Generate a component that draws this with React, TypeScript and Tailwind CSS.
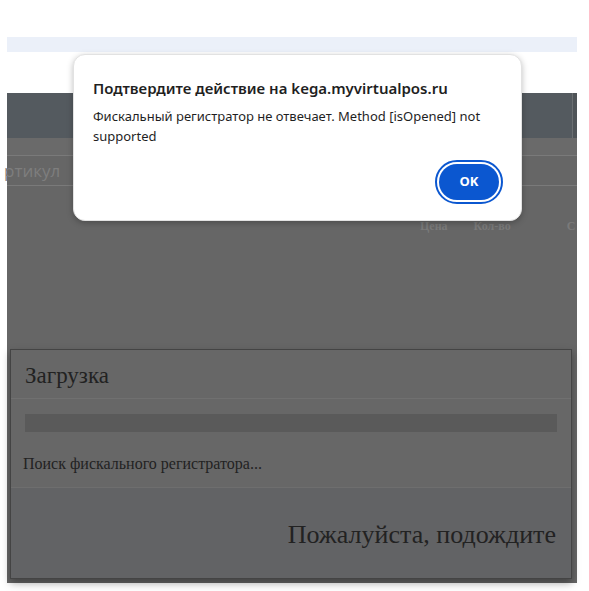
import React from 'react';

const App: React.FC = () => {
  return (
    <div className="relative w-[589px] h-[591px] overflow-hidden bg-white">
      <div className="px-[7px] pt-[37px] w-[584px]">
        {/* top strip */}
        <div className="h-[15px] bg-[#ebf0f9]" />
        <div className="h-[41px] bg-white" />

        {/* dimmed page */}
        <div className="relative h-[490px] bg-[#666666]">
          <div className="flex h-[45px] bg-[#545a5f]">
            <div className="flex-1" />
            <div className="w-px bg-[#6b6f72]" />
            <div className="w-[4px] bg-[#4f5458]" />
          </div>
          <div className="h-[18px] border-b border-[#7a7a7a] bg-[#6a6a6a]" />
          <div className="flex h-[30px] items-center border-b border-[#7a7a7a] bg-[#666666]">
            <span className="-ml-[3px] font-['Open_Sans',sans-serif] text-[17px] text-[#7e7e7e]">ртикул</span>
          </div>
          <div className="flex h-[49px] items-end font-['Liberation_Serif',serif] text-[12px] font-bold text-[#7a7a7a]">
            <span className="ml-[413px]">Цена</span>
            <span className="ml-[26px]">Кол-во</span>
            <span className="ml-[56px]">С</span>
          </div>

          {/* loading modal */}
          <div className="absolute left-[3px] top-[256px] flex h-[230px] w-[562px] flex-col border border-[#444444] bg-[#676767] shadow-[0_4px_8px_rgba(0,0,0,0.35)] font-['Liberation_Serif',serif] text-[#222222]">
            <div className="flex h-[49px] items-center border-b border-[#707070] px-[14px] pt-[4px]">
              <span className="text-[23px]">Загрузка</span>
            </div>
            <div className="flex flex-col px-[14px] pt-[15px]">
              <div className="h-[18px] bg-[#5a5a5a]" />
              <div className="mt-[22px] h-[33px] -ml-[2px] text-[16px] leading-[20px]">Поиск фискального регистратора...</div>
            </div>
            <div className="flex flex-1 items-center justify-end border-t border-[#6e6e6e] bg-[#626365] px-[15px] pt-[2px]">
              <span className="text-[26px]">Пожалуйста, подождите</span>
            </div>
          </div>
        </div>
      </div>

      {/* browser confirm dialog */}
      <div className="absolute left-[73px] top-[54px] h-[167px] w-[449px] rounded-[12px] border border-[#e2e2e2] bg-white shadow-[0_2px_6px_rgba(0,0,0,0.25)] font-['Noto_Sans',sans-serif]">
        <div className="px-[19px] pt-[22px]">
          <div className="text-[15px] font-semibold leading-[22px] text-[#1f1f1f]">
            Подтвердите действие на kega.myvirtualpos.ru
          </div>
          <div className="mt-[7px] w-[400px] text-[13px] leading-[20px] text-[#1f1f1f]">
            Фискальный регистратор не отвечает. Method [isOpened] not supported
          </div>
        </div>
        <div className="absolute left-[361px] top-[105px] flex h-[44px] w-[68px] items-center justify-center rounded-full border-[2px] border-[#0b57d0]">
          <div className="flex h-[36px] w-[60px] items-center justify-center rounded-full bg-[#0b57d0] text-[13px] font-bold text-white">
            OK
          </div>
        </div>
      </div>
    </div>
  );
};

export default App;
